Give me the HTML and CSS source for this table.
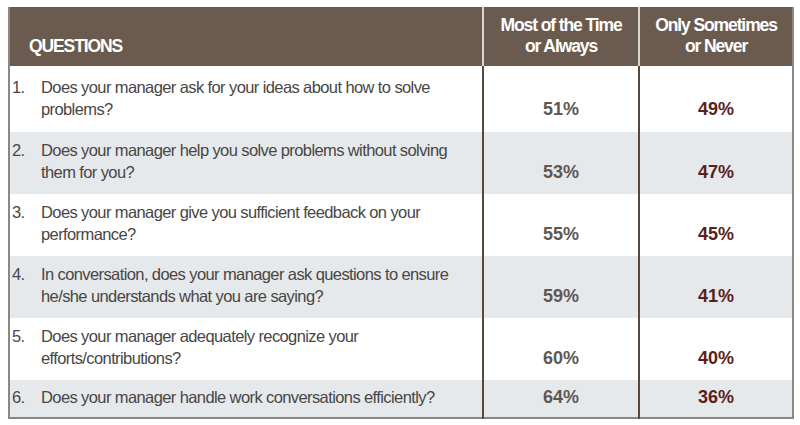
FILE: index.html
```html
<!DOCTYPE html>
<html>
<head>
<meta charset="utf-8">
<link rel="stylesheet" href="styles.css">
</head>
<body>
<table class="survey">
  <colgroup>
    <col class="c-q">
    <col class="c-a">
    <col class="c-b">
  </colgroup>
  <thead>
    <tr>
      <th class="h-q">QUESTIONS</th>
      <th class="h-a">Most of the Time<br>or Always</th>
      <th class="h-b">Only Sometimes<br>or Never</th>
    </tr>
  </thead>
  <tbody>
    <tr class="first">
      <td class="q"><div class="qi"><span class="n">1.</span><span class="t">Does your manager ask for your ideas about how to solve problems?</span></div></td>
      <td class="pa">51%</td>
      <td class="pb">49%</td>
    </tr>
    <tr class="alt">
      <td class="q"><div class="qi"><span class="n">2.</span><span class="t">Does your manager help you solve problems without solving them for you?</span></div></td>
      <td class="pa">53%</td>
      <td class="pb">47%</td>
    </tr>
    <tr>
      <td class="q"><div class="qi"><span class="n">3.</span><span class="t">Does your manager give you sufficient feedback on your performance?</span></div></td>
      <td class="pa">55%</td>
      <td class="pb">45%</td>
    </tr>
    <tr class="alt">
      <td class="q"><div class="qi"><span class="n">4.</span><span class="t">In conversation, does your manager ask questions to ensure he/she understands what you are saying?</span></div></td>
      <td class="pa">59%</td>
      <td class="pb">41%</td>
    </tr>
    <tr>
      <td class="q"><div class="qi"><span class="n">5.</span><span class="t">Does your manager adequately recognize your efforts/contributions?</span></div></td>
      <td class="pa">60%</td>
      <td class="pb">40%</td>
    </tr>
    <tr class="alt last">
      <td class="q"><div class="qi"><span class="n">6.</span><span class="t">Does your manager handle work conversations efficiently?</span></div></td>
      <td class="pa">64%</td>
      <td class="pb">36%</td>
    </tr>
  </tbody>
</table>
</body>
</html>
```
FILE: styles.css
```css
html, body {
  margin: 0;
  padding: 0;
  background: #ffffff;
}

.survey {
  border-collapse: collapse;
  table-layout: fixed;
  width: 784px;
  margin: 7px 0 0 8px;
  font-family: "Liberation Sans", Arial, sans-serif;
  border-left: 2px solid #8a8784;
  border-right: 2px solid #8a8784;
  border-bottom: 2px solid #8a8784;
}

.c-q { width: 474px; }
.c-a { width: 156px; }
.c-b { width: 154px; }

.survey th {
  background: #6b5b4f;
  color: #ffffff;
  font-family: "Liberation Sans", Arial, sans-serif;
  font-weight: bold;
  font-size: 17.5px;
  line-height: 21px;
  vertical-align: bottom;
  padding: 8px 0 9px 0;
  text-align: center;
  letter-spacing: -1.1px;
}

.survey th.h-q {
  text-align: left;
  padding-left: 19px;
}

.survey th.h-a,
.survey th.h-b {
  border-left: 2px solid #dcd6d0;
}

.survey td {
  font-size: 16.5px;
  line-height: 22px;
  color: #494645;
  padding: 7px 4px 11px 2px;
  vertical-align: top;
  background: #ffffff;
}

.survey tr.alt td {
  background: #e6e9eb;
}

.survey tr.first td {
  padding-top: 10px;
  padding-bottom: 12px;
}

.survey tr.last td {
  padding-top: 6px;
  padding-bottom: 9px;
}

.qi {
  display: flex;
  letter-spacing: -0.6px;
}

.qi .n {
  flex: none;
  width: 29px;
}

.qi .t {
  flex: 1;
}

.survey td.pa,
.survey td.pb {
  text-align: center;
  vertical-align: bottom;
  font-weight: bold;
  font-size: 18px;
  padding-left: 0;
  padding-right: 0;
  border-left: 2px solid #55483f;
}

.survey td.pa {
  color: #5f5753;
}

.survey td.pb {
  color: #5b1f1d;
}
```
